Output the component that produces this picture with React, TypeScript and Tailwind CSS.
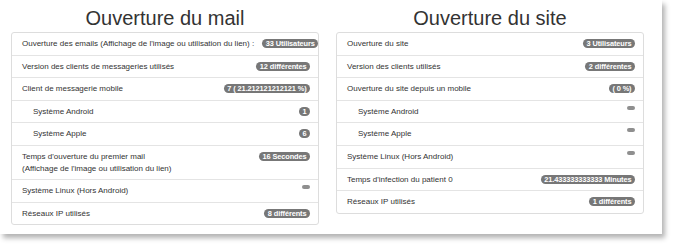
type Row = {
  label: string
  sub?: string
  badge?: string
  indent?: boolean
}

const mailRows: Row[] = [
  { label: "Ouverture des emails (Affichage de l'image ou utilisation du lien) :", badge: '33 Utilisateurs' },
  { label: 'Version des clients de messageries utilisés', badge: '12 différentes' },
  { label: 'Client de messagerie mobile', badge: '7 ( 21.212121212121 %)' },
  { label: 'Système Android', badge: '1', indent: true },
  { label: 'Système Apple', badge: '6', indent: true },
  { label: "Temps d'ouverture du premier mail", sub: "(Affichage de l'image ou utilisation du lien)", badge: '16 Secondes' },
  { label: 'Système Linux (Hors Android)', badge: '' },
  { label: 'Réseaux IP utilisés', badge: '8 différents' },
]

const siteRows: Row[] = [
  { label: 'Ouverture du site', badge: '3 Utilisateurs' },
  { label: 'Version des clients utilisés', badge: '2 différentes' },
  { label: 'Ouverture du site depuis un mobile', badge: '( 0 %)' },
  { label: 'Système Android', badge: '', indent: true },
  { label: 'Système Apple', badge: '', indent: true },
  { label: 'Système Linux (Hors Android)', badge: '' },
  { label: "Temps d'infection du patient 0", badge: '21.433333333333 Minutes' },
  { label: 'Réseaux IP utilisés', badge: '1 différents' },
]

function Badge({ text }: { text: string }) {
  // empty counters still show as a small grey pill
  if (!text) {
    return <span className="block w-[8px] h-[4px] rounded-full bg-[#8f8f8f]" />
  }
  return (
    <span className="block rounded-full bg-[#777] text-white font-bold text-[7.4px] tracking-[-0.1px] leading-[9px] px-[3.5px] mt-[1px] whitespace-nowrap">
      {text}
    </span>
  )
}

function StatList({ title, rows }: { title: string; rows: Row[] }) {
  return (
    <div className="w-[308px] flex flex-col">
      <h2 className="h-[32px] text-center text-[20px] leading-[26px] pt-[5px] text-[#333]">{title}</h2>
      <ul className="border border-[#ddd] rounded-[3px] bg-white divide-y divide-[#e4e4e4]">
        {rows.map((row, i) => (
          <li
            key={i}
            className={`flex items-start justify-between gap-2 py-[5px] pr-[8px] ${row.indent ? 'pl-[21px]' : 'pl-[10px]'}`}
          >
            <div className="leading-[11.6px] text-[8px] text-[#333] whitespace-nowrap">
              <div>{row.label}</div>
              {row.sub && <div>{row.sub}</div>}
            </div>
            {row.badge !== undefined && <Badge text={row.badge} />}
          </li>
        ))}
      </ul>
    </div>
  )
}

export default function App() {
  return (
    <div className="w-[673px] h-[249px] bg-white" style={{ fontFamily: '"Liberation Sans", Arial, sans-serif' }}>
      <div className="w-[662px] h-[234px] bg-white shadow-[3px_4px_5px_rgba(0,0,0,0.3)] flex gap-[17px] pl-[11px]">
        <StatList title="Ouverture du mail" rows={mailRows} />
        <StatList title="Ouverture du site" rows={siteRows} />
      </div>
    </div>
  )
}
